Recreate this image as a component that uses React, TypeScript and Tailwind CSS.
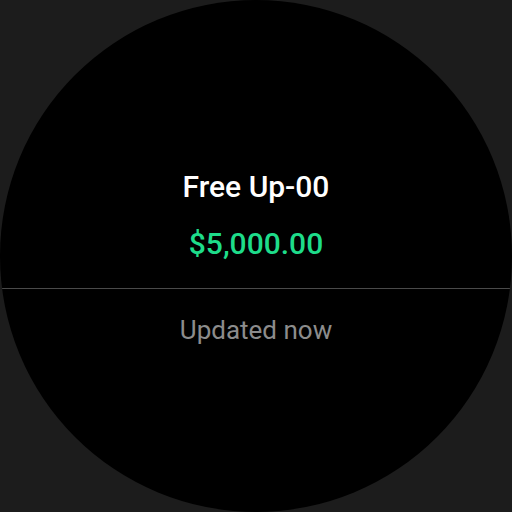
import React from "react";

export default function App() {
   return (
      <div className="w-[512px] h-[512px] bg-[#1c1c1c] overflow-hidden" style={{ fontFamily: "Roboto, 'Noto Sans', sans-serif" }}>
         <div className="w-[512px] h-[512px] rounded-full bg-black flex flex-col overflow-hidden">
            {/* Top: title and balance */}
            <div className="h-[288px] flex flex-col items-center justify-end pb-[28px]">
               <div className="text-white text-[30px] font-medium leading-[32px]">Free Up-00</div>
               <div className="text-[#1edc8a] text-[30px] font-medium leading-[32px] mt-[25px]">$5,000.00</div>
            </div>
            <div className="h-px bg-[#4a4a4a] w-full" />
            <div className="flex flex-col items-center pt-[25px]">
               <div className="text-[#8c8c8c] text-[26px] leading-[32px]">Updated now</div>
            </div>
         </div>
      </div>
   );
}
